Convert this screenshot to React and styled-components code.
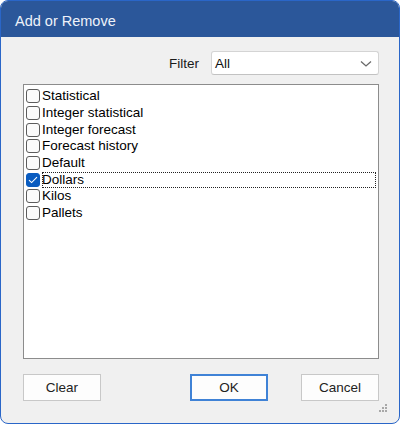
import React from "react";
import styled, { createGlobalStyle } from "styled-components";

const GlobalStyle = createGlobalStyle`
  html, body {
    margin: 0;
    padding: 0;
    background: #ffffff;
  }
  body {
    font-family: "Liberation Sans", Arial, sans-serif;
  }
`;

const Window = styled.div`
  position: relative;
  width: 400px;
  height: 424px;
  box-sizing: border-box;
  border: 1px solid #2a66c8;
  border-radius: 8px;
  overflow: hidden;
  background: #f0f0f0;
  display: flex;
  flex-direction: column;
`;

const TitleBar = styled.div`
  height: 36px;
  flex: none;
  box-sizing: border-box;
  background: #2b579a;
  color: #eef2f9;
  font-size: 14.5px;
  display: flex;
  align-items: center;
  padding: 3px 0 0 14px;
`;

const Body = styled.div`
  flex: 1;
  display: flex;
  flex-direction: column;
  padding: 14px 20px 0 22px;
`;

const FilterRow = styled.div`
  display: flex;
  justify-content: flex-end;
  align-items: center;
  gap: 12px;
  height: 24px;
`;

const Label = styled.span`
  font-size: 13.5px;
  color: #1a1a1a;
  padding-top: 1px;
`;

const Select = styled.div`
  width: 168px;
  height: 24px;
  box-sizing: border-box;
  background: #ffffff;
  border: 1px solid #d4d4d4;
  border-bottom-color: #c2c2c2;
  border-radius: 3px;
  display: flex;
  align-items: center;
  justify-content: space-between;
  padding: 1px 6px 0 3px;
  font-size: 13.5px;
  color: #111;
`;

const ListBox = styled.div`
  margin-top: 9px;
  height: 275px;
  box-sizing: border-box;
  background: #ffffff;
  border: 1px solid #8c8c8c;
  padding: 3px 1px 0 2px;
  display: flex;
  flex-direction: column;
`;

const Row = styled.div`
  height: 16.7px;
  display: flex;
  align-items: center;
  gap: 2px;
`;

const Box = styled.span`
  width: 14px;
  height: 14px;
  box-sizing: border-box;
  flex: none;
  border-radius: 3px;
  border: 1px solid ${p => (p.checked ? "#0a5cc0" : "#5c5c5c")};
  background: ${p => (p.checked ? "#0a5cc0" : "#fbfbfb")};
  display: flex;
  align-items: center;
  justify-content: center;
`;

const ItemText = styled.span`
  flex: 1;
  height: 16px;
  line-height: 16px;
  font-size: 13.5px;
  color: #000;
  box-sizing: border-box;
  margin-right: 1px;
  outline: ${p => (p.focused ? "1px dotted #222" : "none")};
  outline-offset: -1px;
`;

const ButtonRow = styled.div`
  margin-top: 15px;
  display: flex;
  align-items: center;
`;

const Button = styled.div`
  width: 78px;
  height: 27px;
  box-sizing: border-box;
  background: #fdfdfd;
  border: ${p => (p.primary ? "2px solid #3f82d6" : "1px solid #c8c8c8")};
  display: flex;
  align-items: center;
  justify-content: center;
  font-size: 13.5px;
  color: #222;
  margin-left: ${p => p.offset || 0}px;
`;

const Grip = styled.svg`
  position: absolute;
  right: 11px;
  bottom: 10px;
`;

const items = [
  "Statistical",
  "Integer statistical",
  "Integer forecast",
  "Forecast history",
  "Default",
  "Dollars",
  "Kilos",
  "Pallets",
];

function App() {
  return (
    <>
      <GlobalStyle />
      <Window>
        <TitleBar>Add or Remove</TitleBar>
        <Body>
          <FilterRow>
            <Label>Filter</Label>
            <Select>
              <span>All</span>
              <svg width="12" height="8" viewBox="0 0 12 8">
                <polyline
                  points="1,1.5 6,6 11,1.5"
                  fill="none"
                  stroke="#6a6a6a"
                  strokeWidth="1.3"
                />
              </svg>
            </Select>
          </FilterRow>
          <ListBox>
            {items.map(name => {
              const on = name === "Dollars";
              return (
                <Row key={name}>
                  <Box checked={on}>
                    {on && (
                      <svg width="10" height="8" viewBox="0 0 10 8">
                        <polyline
                          points="1,4.2 3.6,6.6 9,1.2"
                          fill="none"
                          stroke="#ffffff"
                          strokeWidth="1.1"
                        />
                      </svg>
                    )}
                  </Box>
                  <ItemText focused={on}>{name}</ItemText>
                </Row>
              );
            })}
          </ListBox>
          <ButtonRow>
            <Button>Clear</Button>
            <Button primary offset={89}>OK</Button>
            <Button offset={33}>Cancel</Button>
          </ButtonRow>
        </Body>
        <Grip width="10" height="10" viewBox="0 0 10 10">
          <g fill="#a8a8a8">
            <rect x="7" y="1" width="2" height="2" />
            <rect x="4" y="4" width="2" height="2" />
            <rect x="7" y="4" width="2" height="2" />
            <rect x="1" y="7" width="2" height="2" />
            <rect x="4" y="7" width="2" height="2" />
            <rect x="7" y="7" width="2" height="2" />
          </g>
        </Grip>
      </Window>
    </>
  );
}

export default App;
